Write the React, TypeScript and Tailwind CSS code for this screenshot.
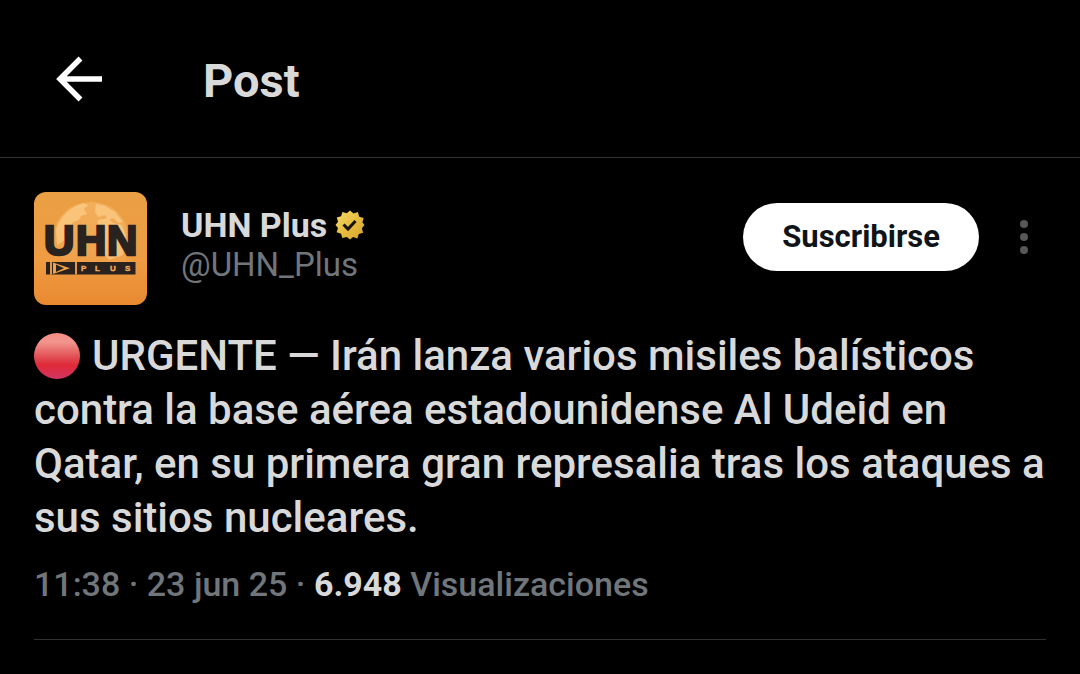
function BackArrow() {
  return (
    <svg viewBox="0 0 46 46" className="size-[46px]" fill="none" stroke="#ffffff" strokeWidth="5.500" aria-hidden="true">
      <path d="M24.500 2.500 4 23l20.500 20.500M4 23h42" />
    </svg>
  );
}

function Avatar() {
  return (
    <svg viewBox="0 0 113 113" className="size-[113px] shrink-0 rounded-xl" role="img" aria-label="UHN Plus">
      <defs>
        <linearGradient id="sky" x1="0" y1="0" x2="0" y2="1">
          <stop offset="0" stopColor="#ea9f43" />
          <stop offset="0.6" stopColor="#ef9c43" />
          <stop offset="1" stopColor="#e98930" />
        </linearGradient>
        <linearGradient id="globe" x1="0" y1="0" x2="0" y2="1">
          <stop offset="0" stopColor="#f6b768" />
          <stop offset="1" stopColor="#f0a04a" />
        </linearGradient>
      </defs>
      <rect width="113" height="113" fill="url(#sky)" />
      <path d="M20 44a37 34 0 0 1 74 0v20q-8 10-18 10H40q-20-8-20-30z" fill="url(#globe)" opacity="0.7" />
      <path d="M22 38q4-15 18-23l9-4 5 2-4 4 3 5-6 2-2 4-6 2-2 5-7 3 1 10-8 5zM62 12l9 2 10 6 8 10-4 1-6-5-5 2-3-5-7 2-3-5zM64 28l10-2 5 5 9 2 4 10-3 20-14 5-7-9-6-15z" fill="#ffd795" opacity="0.55" />
      <text x="10 42 73" y="63" fontSize="42" fontWeight="700" fill="#29221e" stroke="#29221e" strokeWidth="2.500" className="font-['Liberation_Sans',sans-serif]">UHN</text>
      <path d="M12 70h89.500v12.500H12z" fill="#29221e" />
      <path d="M17 70v12.500M42 70v12.500" stroke="#ec953b" strokeWidth="2" />
      <path d="M19 70.500 36 76.200 19 82zM22 72.500v7.500l8-3.800z" fill="#f0a14a" fillRule="evenodd" />
      <text x="47 61 76 91" y="79" fontSize="8" fontWeight="700" fill="#f3ac59" stroke="#f3ac59" strokeWidth="0.400" className="font-['Liberation_Sans',sans-serif]">PLUS</text>
    </svg>
  );
}

function VerifiedBadge() {
  return (
    <svg viewBox="0 0 30 30" className="size-[30px]" role="img" aria-label="Cuenta verificada">
      <defs>
        <linearGradient id="gold" x1="0" y1="0" x2="1" y2="1">
          <stop offset="0" stopColor="#f5dc6c" />
          <stop offset="0.5" stopColor="#e6bd3f" />
          <stop offset="1" stopColor="#d6a12f" />
        </linearGradient>
      </defs>
      <path
        d="m15 .5 3.500 3.100 4.400-1.500 1.300 4.600 4.500 1.200-1.300 4.400L29.500 15l-2.600 3.200 1.200 4.500-4.300 1.200-1.500 4.500-4.200-1.300L15 29.500l-3.200-2.600-4.500 1.200-1.200-4.300-4.500-1.500 1.400-4.200L.5 15l2.600-3.200-1.400-4.300 4.400-1.200 1.300-4.400 4.300 1.400z"
        fill="url(#gold)"
      />
      <path d="m8.500 14.500 4.500 4.500L20.500 11" fill="none" stroke="#171306" strokeWidth="3" />
    </svg>
  );
}

function MoreDots() {
  return (
    <svg viewBox="0 0 8 34" className="h-[34px] w-2" fill="#555759" aria-hidden="true">
      <circle cx="4" cy="4" r="4" />
      <circle cx="4" cy="17" r="4" />
      <circle cx="4" cy="30" r="4" />
    </svg>
  );
}

function RedCircle() {
  return (
    <svg viewBox="0 0 46 46" className="mr-3 inline-block size-[46px] align-[-9px]" role="img" aria-label="Círculo rojo">
      <defs>
        <linearGradient id="red" x1="0" y1="0" x2="0" y2="1">
          <stop offset="0" stopColor="#f58c84" />
          <stop offset="0.2" stopColor="#f1958c" />
          <stop offset="0.55" stopColor="#e04950" />
          <stop offset="0.7" stopColor="#df2937" />
          <stop offset="1" stopColor="#d43566" />
        </linearGradient>
      </defs>
      <circle cx="23" cy="23" r="23" fill="url(#red)" />
    </svg>
  );
}

export default function App() {
  return (
    <div className="min-h-screen bg-black font-[Roboto,sans-serif] text-[#d9d9d9]">
      <header className="flex h-[158px] items-center gap-[101px] border-b border-[#2f3336] px-14">
        <button type="button" aria-label="Atrás">
          <BackArrow />
        </button>
        <h1 className="pt-1 text-[47px] leading-14 font-bold">Post</h1>
      </header>
      <main className="px-[34px] pt-[34px]">
        <article className="border-b border-[#2f3336] pb-[31px]">
          <div className="flex items-start">
            <Avatar />
            <div className="ml-[34px] pt-[13px]">
              <div className="flex items-center gap-2">
                <span className="text-[34px] leading-10 font-bold">UHN Plus</span>
                <VerifiedBadge />
              </div>
              <p className="text-[33px] leading-10 text-[#71767b]">@UHN_Plus</p>
            </div>
            <div className="mt-[11px] ml-auto flex items-center gap-[41px] pr-[18px]">
              <button type="button" className="h-[68px] rounded-full bg-white px-[39px] text-[31px] font-bold text-[#0f1419]">
                Suscribirse
              </button>
              <button type="button" aria-label="Más opciones">
                <MoreDots />
              </button>
            </div>
          </div>
          <p className="-mr-2 mt-6 text-[42px] leading-[54px] font-medium">
            <RedCircle />
            URGENTE — Irán lanza varios misiles balísticos contra la base aérea estadounidense Al Udeid en Qatar, en su primera gran represalia tras los ataques a sus sitios nucleares.
          </p>
          <p className="mt-[15px] text-[34px] leading-12 font-medium text-[#71767b]">
            11:38 · 23 jun 25 · <span className="font-bold text-[#d9d9d9]">6.948</span> Visualizaciones
          </p>
        </article>
      </main>
    </div>
  );
}
